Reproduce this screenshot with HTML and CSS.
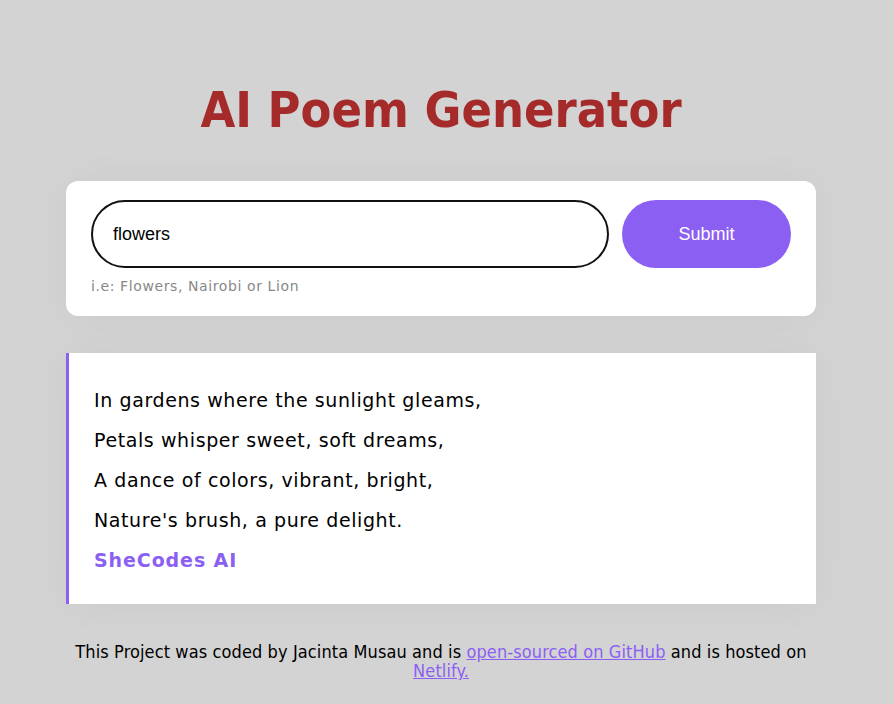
FILE: index.html
```html
<!DOCTYPE html>
<html>
<head>
<meta charset="utf-8">
<title>AI Poem Generator</title>
<link rel="stylesheet" href="styles.css">
</head>
<body>
<div class="page">
  <div class="container">
    <h1 class="title">AI Poem Generator</h1>
    <form class="search-card">
      <div class="search-row">
        <input class="search-input" type="text" value="flowers">
        <button class="submit-btn" type="button">Submit</button>
      </div>
      <div class="hint">i.e: Flowers, Nairobi or Lion</div>
    </form>
    <div class="poem">
      <div class="line">In gardens where the sunlight gleams,</div>
      <div class="line">Petals whisper sweet, soft dreams,</div>
      <div class="line">A dance of colors, vibrant, bright,</div>
      <div class="line">Nature's brush, a pure delight.</div>
      <div class="line signature">SheCodes AI</div>
    </div>
    <footer class="footer">This Project was coded by Jacinta Musau and is <a href="#">open-sourced on GitHub</a> and is hosted on <a href="#">Netlify.</a></footer>
  </div>
</div>
</body>
</html>
```

FILE: styles.css
```css
html, body {
  margin: 0;
  padding: 0;
  background: #d3d3d3;
}
body {
  font-family: "DejaVu Sans", Verdana, sans-serif;
}
.page {
  width: 882px;
}
.container {
  width: 750px;
  margin: 0 auto;
  padding-top: 82px;
}
.title {
  margin: 0 0 43px;
  text-align: center;
  font-family: "DejaVu Sans Condensed", "DejaVu Sans", sans-serif;
  font-weight: bold;
  font-size: 50px;
  line-height: 56px;
  color: #a52a2a;
}
.search-card {
  margin: 0;
  background: #fff;
  border-radius: 12px;
  padding: 19px 25px 21px;
  box-shadow: 0 0 40px rgba(0,0,0,0.04);
}
.search-row {
  display: flex;
  gap: 13px;
}
.search-input {
  box-sizing: border-box;
  width: 518px;
  height: 68px;
  border: 2px solid #111;
  border-radius: 34px;
  padding: 0 20px;
  font-family: "Liberation Sans", Arial, sans-serif;
  font-size: 18px;
  color: #000;
  outline: none;
  background: #fff;
}
.submit-btn {
  width: 169px;
  height: 68px;
  border: none;
  border-radius: 34px;
  background: #8c5ff3;
  color: #fff;
  font-family: "Liberation Sans", Arial, sans-serif;
  font-size: 18px;
}
.hint {
  margin-top: 9px;
  font-family: "DejaVu Sans", Verdana, sans-serif;
  font-size: 14px;
  letter-spacing: 0.6px;
  line-height: 18px;
  color: #888;
}
.poem {
  margin-top: 37px;
  background: #fff;
  border-left: 3px solid #8c5ff3;
  padding: 27px 25px 24px;
  box-shadow: 0 0 40px rgba(0,0,0,0.04);
}
.line {
  font-size: 19px;
  letter-spacing: 0.6px;
  line-height: 40px;
  color: #000;
}
.signature {
  font-weight: bold;
  letter-spacing: 0.9px;
  color: #8c5ff3;
}
.footer {
  margin-top: 38px;
  text-align: center;
  font-family: "DejaVu Sans Condensed", "DejaVu Sans", sans-serif;
  font-size: 18px;
  letter-spacing: 0.1px;
  line-height: 19px;
  color: #000;
}
.footer a {
  color: #8c5ff3;
}
```
